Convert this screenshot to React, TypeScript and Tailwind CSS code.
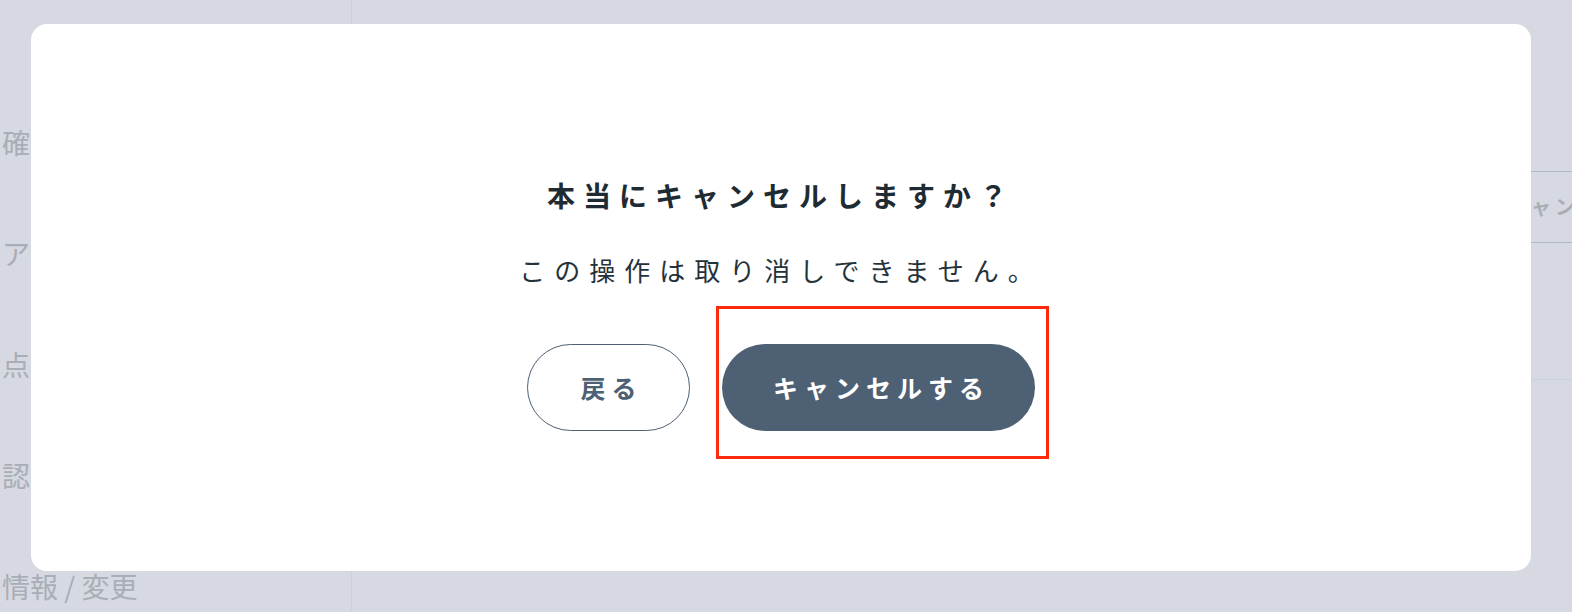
import React from 'react';

const sideItems = ['確認事項', 'アカウント', '点検履歴', '認証設定', '情報 / 変更'];

const CancelDialog: React.FC = () => {
  return (
    <div className="flex flex-1 flex-col items-center rounded-2xl bg-white pt-[154px]">
      <h2 className="text-[28px] font-bold leading-[34px] tracking-[8px] text-[#1f2b33]">
        本当にキャンセルしますか？
      </h2>
      <p className="mt-[41px] text-[26px] leading-[34px] tracking-[9px] text-[#26323a]">
        この操作は取り消しできません。
      </p>
      <div className="mt-[57px] flex gap-[32px]">
        <button className="flex h-[87px] w-[163px] items-center justify-center rounded-full border-[1.5px] border-[#4e6073] bg-white pl-[6px] text-[25px] font-bold tracking-[6px] text-[#4e6073]">
          戻る
        </button>
        <div className="relative">
          <button className="flex h-[87px] w-[313px] items-center justify-center rounded-full bg-[#4e6073] pl-[6px] text-[25px] font-bold tracking-[6px] text-white">
            キャンセルする
          </button>
          <span className="pointer-events-none absolute -top-[38px] -right-[14px] -bottom-[28px] -left-[6px] border-[3px] border-[#ff2a0e]" />
        </div>
      </div>
    </div>
  );
};

const App: React.FC = () => {
  return (
    <div className="relative h-screen w-full overflow-hidden bg-[#d6d9e1] font-['Noto_Sans_CJK_JP',sans-serif]">
      <div className="flex h-full">
        <aside className="w-[352px] shrink-0 border-r border-[#cdd1d9] pt-[86px]">
          {sideItems.map(item => (
            <div key={item} className="flex h-[111px] items-center whitespace-nowrap pl-[2px] text-[28px] text-[#a9aeb6]">
              {item}
            </div>
          ))}
        </aside>
        <main className="flex-1">
          <div className="h-[380px] border-b border-[#cdd1d9] pt-[171px]">
            <button className="ml-[1110px] flex h-[72px] w-[300px] items-center whitespace-nowrap border border-[#b3b8c0] pl-[44px] text-[20px] font-bold tracking-[4px] text-[#a9aeb6]">
              キャンセルする
            </button>
          </div>
        </main>
      </div>
      <div className="absolute inset-0 flex pt-[24px] pr-[41px] pb-[41px] pl-[31px]">
        <CancelDialog />
      </div>
    </div>
  );
};

export default App;
